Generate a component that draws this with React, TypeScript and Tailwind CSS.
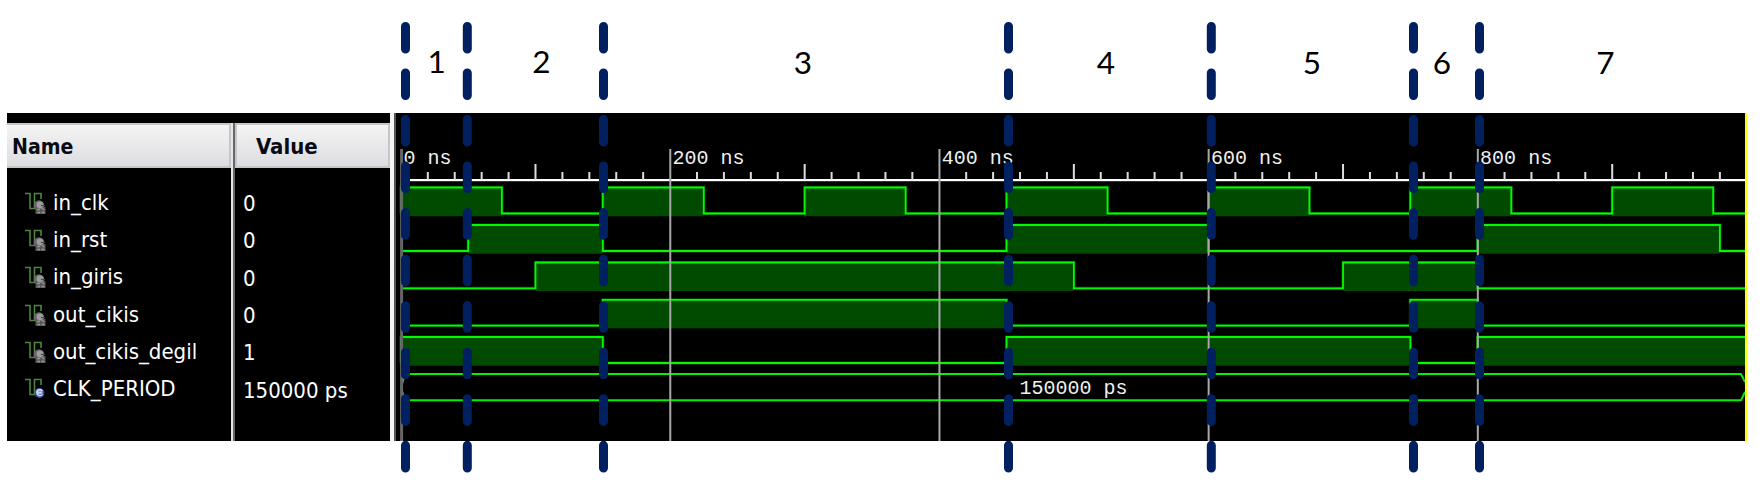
import React from "react";

const PX_PER_NS = 1.3459;
const toX = (ns: number) => 400.9 + ns * PX_PER_NS - 396;
const RIGHT = 1349;

type Signal = { name: string; value: string; hi: number; lo: number; pulses: [number, number][] };

const signals: Signal[] = [
  { name: "in_clk", value: "0", hi: 187.5, lo: 213.5, pulses: [[0, 75], [150, 225], [300, 375], [450, 525], [600, 675], [750, 825], [900, 975]] },
  { name: "in_rst", value: "0", hi: 225, lo: 251, pulses: [[50, 150], [450, 600], [800, 980]] },
  { name: "in_giris", value: "0", hi: 262.5, lo: 288.3, pulses: [[100, 500], [700, 800]] },
  { name: "out_cikis", value: "0", hi: 299.8, lo: 325.6, pulses: [[150, 450], [750, 800]] },
  { name: "out_cikis_degil", value: "1", hi: 337, lo: 363, pulses: [[0, 150], [450, 750], [800, 1010]] },
];

const names = [...signals.map((s) => s.name), "CLK_PERIOD"];
const values = [...signals.map((s) => s.value), "150000 ps"];

function SignalIcon({ constant }: { constant?: boolean }) {
  return (
    <svg width="22" height="24" viewBox="0 0 22 24" className="shrink-0">
      <path d="M0 2.5H5V17.5H9.5V2.5H16V8" fill="none" stroke="#4d8440" strokeWidth="1.6" />
      {constant ? (
        <>
          <circle cx="14.5" cy="16" r="4.9" fill="#3a50a4" />
          <circle cx="14" cy="14.8" r="3" fill="#8e9fd8" />
          <path d="M17.5 14.2a3 3 0 1 0 0 3M12.5 15.8h5" fill="none" stroke="#d5dcf5" strokeWidth="1.3" />
        </>
      ) : (
        <>
          <circle cx="14" cy="14.5" r="5.3" fill="#686868" />
          <rect x="10.5" y="16" width="10" height="7" fill="#585858" />
          <circle cx="15" cy="14" r="3.4" fill="#9c9c9c" />
          <path d="M12 18.5h3M16.5 17l3 2M12.5 21.5h2.5M16.5 21.5h3" stroke="#959595" strokeWidth="1.5" />
          <path d="M16 14.5h4" stroke="#444" strokeWidth="1.2" />
        </>
      )}
    </svg>
  );
}

function Wave({ s }: { s: Signal }) {
  const end = (b: number) => Math.min(toX(b), RIGHT);
  let d = `M${toX(0)} ${s.lo}`;
  s.pulses.forEach(([a, b]) => {
    d += `H${toX(a)}V${s.hi}H${end(b)}`;
    if (b <= 1000) d += `V${s.lo}`;
  });
  const last = s.pulses[s.pulses.length - 1];
  if (last[1] <= 1000) d += `H${RIGHT}`;
  return (
    <g>
      {s.pulses.map(([a, b]) => (
        <rect key={a} x={toX(a)} y={s.hi} width={end(b) - toX(a)} height={s.lo - s.hi + 2.7} fill="#004b00" />
      ))}
      <path d={d} fill="none" stroke="#005000" strokeWidth="3" />
      <path d={d} fill="none" stroke="#00fa00" strokeWidth="1.8" />
    </g>
  );
}

function Waveforms() {
  const ticks = Array.from({ length: 50 }, (_, i) => i * 20);
  return (
    <svg width="1349" height="328" viewBox="0 113 1349 328" className="block shrink-0 bg-black">
      {signals.map((s) => (
        <Wave key={s.name} s={s} />
      ))}
      <path d="M5 387.5L9 374H1345L1349 382M5 387.5L9 400.3H1345L1349 392" fill="none" stroke="#00f200" strokeWidth="1.9" />
      <rect x="5" y="179" width="1344" height="2.2" fill="#fff" />
      {ticks.map((t) =>
        t % 200 === 0 ? (
          <rect key={t} x={toX(t) - 0.8} y="149" width={t ? 2 : 3} height="292" fill={t ? "#a8a8a8" : "#666"} />
        ) : (
          <rect key={t} x={toX(t) - 1} y={t % 100 === 0 ? 164 : 172} width="2" height={t % 100 === 0 ? 16 : 8} fill="#dcdcdc" />
        ),
      )}
      <g fill="#f0f0f0" fontFamily="'Liberation Mono', monospace" fontSize="20">
        {[0, 200, 400, 600, 800].map((t) => (
          <text key={t} x={toX(t) + 2.5} y="164">{t} ns</text>
        ))}
        <text x="623.5" y="394">150000 ps</text>
      </g>
    </svg>
  );
}

const cursors = [405.5, 467.3, 603.5, 1008.5, 1211.3, 1413.5, 1479.5];
const intervals: [string, number, number][] = [
  ["1", 436.6, 73],
  ["2", 541.3, 73],
  ["3", 803, 74],
  ["4", 1106, 74],
  ["5", 1312, 74],
  ["6", 1441.8, 74],
  ["7", 1605.5, 74],
];

export default function App() {
  return (
    <div className="relative h-[492px] w-[1762px] overflow-hidden bg-white pl-[7px] pt-[113px] font-['DejaVu_Sans_Condensed','DejaVu_Sans',sans-serif]">
      <div className="flex h-[328px] w-[1740px] bg-black">
        <div className="w-[224px] shrink-0 pt-[10px]">
          <div className="flex h-[45px] items-center border-2 border-l-0 border-[#c9c4cb] bg-linear-to-b from-[#f4f4f4] to-[#dddde1] pl-[5px] pt-[1px] text-[22px] font-bold text-[#0a0a14]">
            <span className="origin-left scale-x-[0.96]">Name</span>
          </div>
          <div className="pt-[16px]">
            {names.map((n, i) => (
              <div key={n} className="flex h-[37.3px] items-center pl-[18px] text-[22px] leading-none text-white">
                <SignalIcon constant={i === 5} />
                <span className="ml-[6px] whitespace-nowrap">{n}</span>
              </div>
            ))}
          </div>
        </div>
        <div className="mt-[10px] w-[4px] shrink-0 border-l-2 border-r-2 border-l-[#e6e6e6] border-r-[#666]" />
        <div className="w-[155px] shrink-0 pt-[10px]">
          <div className="flex h-[45px] items-center border-2 border-[#c9c4cb] bg-linear-to-b from-[#f4f4f4] to-[#dddde1] pl-[19px] pt-[1px] text-[22px] font-bold text-[#0a0a14]">
            <span>Value</span>
          </div>
          <div className="pt-[17.5px]">
            {values.map((v, i) => (
              <div key={i} className="flex h-[37.3px] items-center pl-[8px] text-[22px] leading-none text-white">
                <span className="whitespace-nowrap">{v}</span>
              </div>
            ))}
          </div>
        </div>
        <div className="w-[6px] shrink-0 border-l-4 border-r-2 border-l-[#f4f4f4] border-r-[#555]" />
        <Waveforms />
        <div className="w-[2px] shrink-0 bg-[#ffff00]" />
      </div>
      <svg width="1762" height="492" viewBox="0 0 1762 492" className="pointer-events-none absolute left-0 top-0">
        {cursors.map((x) => (
          <line key={x} x1={x} x2={x} y1="26.4" y2="469" stroke="#002060" strokeWidth="9" strokeLinecap="round" strokeDasharray="22.6 23.95" />
        ))}
        <g fontFamily="Lato, sans-serif" fontSize="31.5" textAnchor="middle" fill="#000">
          {intervals.map(([n, x, y]) => (
            <text key={n} x={x} y={y}>{n}</text>
          ))}
        </g>
      </svg>
    </div>
  );
}
